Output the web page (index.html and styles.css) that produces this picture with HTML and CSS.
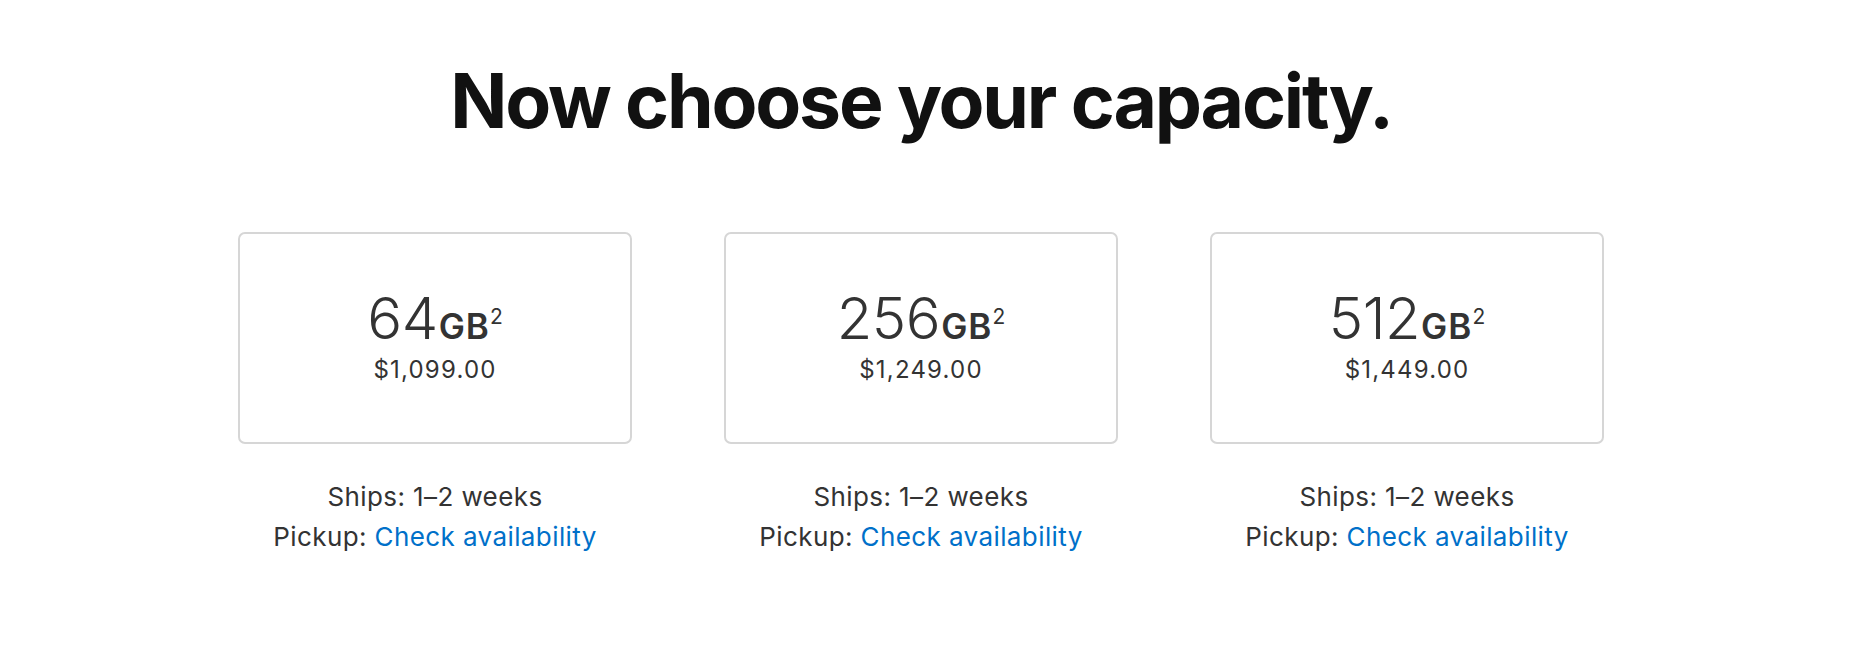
FILE: index.html
```html
<!DOCTYPE html>
<html lang="en">
<head>
<meta charset="utf-8">
<title>Now choose your capacity.</title>
<link rel="stylesheet" href="styles.css">
</head>
<body>
<main class="page">
  <h1 class="title">Now choose your capacity.</h1>
  <div class="options">
    <div class="option">
      <div class="card">
        <div class="capacity"><span class="num">64</span><span class="unit">GB</span><span class="fn">2</span></div>
        <div class="price">$1,099.00</div>
      </div>
      <div class="info">
        <div class="line">Ships: 1–2 weeks</div>
        <div class="line">Pickup: <a class="link" href="#">Check availability</a></div>
      </div>
    </div>
    <div class="option">
      <div class="card">
        <div class="capacity"><span class="num">256</span><span class="unit">GB</span><span class="fn">2</span></div>
        <div class="price">$1,249.00</div>
      </div>
      <div class="info">
        <div class="line">Ships: 1–2 weeks</div>
        <div class="line">Pickup: <a class="link" href="#">Check availability</a></div>
      </div>
    </div>
    <div class="option">
      <div class="card">
        <div class="capacity"><span class="num">512</span><span class="unit">GB</span><span class="fn">2</span></div>
        <div class="price">$1,449.00</div>
      </div>
      <div class="info">
        <div class="line">Ships: 1–2 weeks</div>
        <div class="line">Pickup: <a class="link" href="#">Check availability</a></div>
      </div>
    </div>
  </div>
</main>
</body>
</html>
```
FILE: styles.css
```css
html, body {
  margin: 0;
  padding: 0;
  background: #ffffff;
}

body {
  font-family: Inter, "Noto Sans", "Liberation Sans", sans-serif;
  color: #333333;
}

.page {
  width: 1366px;
  margin-left: 238px;
  padding-top: 58px;
}

.title {
  margin: 0;
  font-size: 75px;
  line-height: 85px;
  font-weight: 700;
  letter-spacing: -2.2px;
  color: #111111;
  text-align: center;
}

.options {
  margin-top: 89px;
  display: grid;
  grid-template-columns: repeat(3, 394px);
  column-gap: 92px;
}

.option {
  display: flex;
  flex-direction: column;
  align-items: stretch;
}

.card {
  box-sizing: border-box;
  height: 212px;
  border: 2px solid #d6d6d6;
  border-radius: 7px;
  padding-top: 52px;
  text-align: center;
}

.capacity {
  font-size: 58px;
  line-height: 64px;
  height: 64px;
  color: #333333;
}

.num {
  font-weight: 300;
  letter-spacing: -0.5px;
}

.unit {
  font-size: 35px;
  font-weight: 600;
  letter-spacing: 1px;
  margin-left: 1px;
}

.fn {
  font-size: 21px;
  line-height: 1;
  vertical-align: 15px;
}

.price {
  margin-top: 5px;
  font-size: 24px;
  line-height: 30px;
  letter-spacing: 1.2px;
  color: #333333;
}

.info {
  margin-top: 33px;
  text-align: center;
  font-size: 26px;
  line-height: 40px;
  letter-spacing: 0.4px;
  color: #333333;
}

.link {
  color: #0070c9;
  text-decoration: none;
}
```
